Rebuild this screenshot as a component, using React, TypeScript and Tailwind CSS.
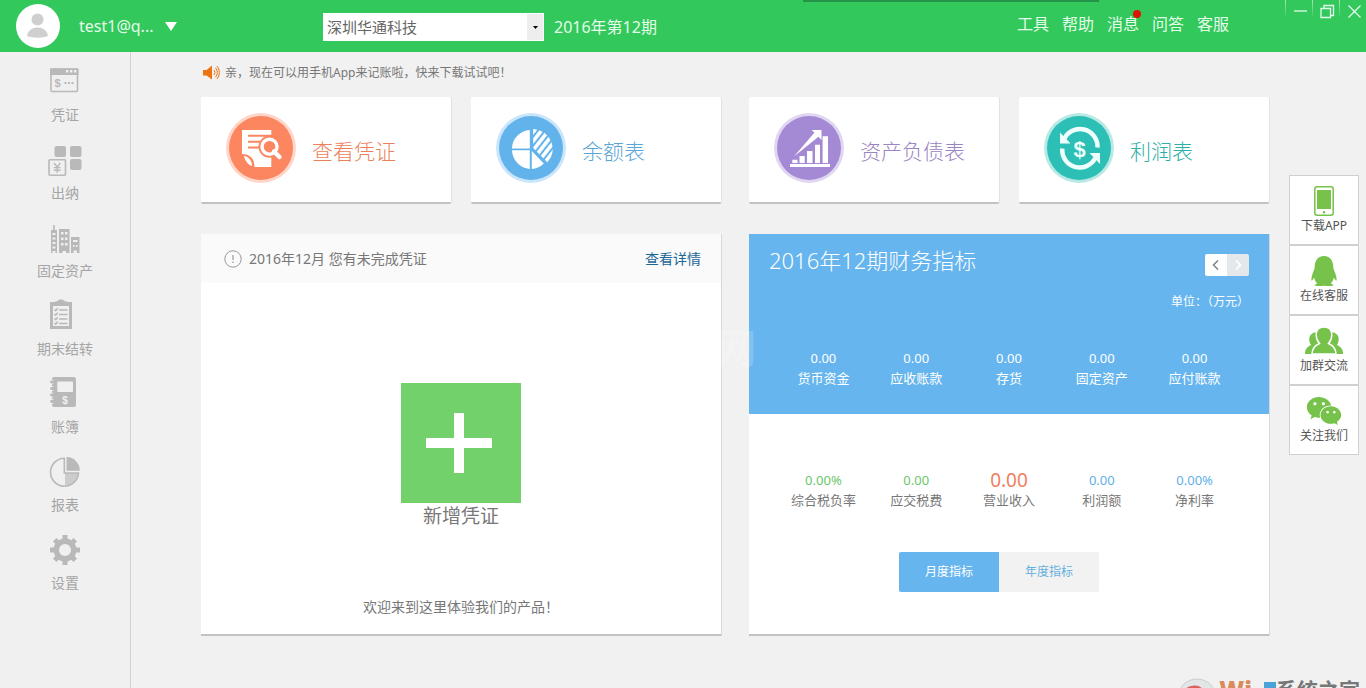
import type { ReactNode } from "react";
import { FaQq, FaWeixin } from "react-icons/fa";

const GREY = "#b9b9b9";

function VoucherIcon() {
  return (
    <svg width="40" height="40" viewBox="0 0 40 40">
      <rect x="6" y="8" width="26.5" height="22.5" rx="1" fill="none" stroke={GREY} strokeWidth="1.6" />
      <path d="M5 7.5h28.5V14H5z" fill={GREY} />
      <path d="M21 9h2.4v2.4H21zM25 9h2.4v2.4H25zM29 9h2.4v2.4H29z" fill="#f0f0f0" />
      <text x="9.5" y="26" fontSize="11" fontWeight="bold" fontFamily="Liberation Sans" fill={GREY}>$</text>
      <path d="M19.5 21h2v2h-2zM23 21h2v2h-2zM26.5 21h2v2h-2z" fill={GREY} />
    </svg>
  );
}

function CashierIcon() {
  return (
    <svg width="40" height="40" viewBox="0 0 40 40">
      <g fill={GREY}>
        <rect x="9.5" y="7" width="11.5" height="11" rx="2" />
        <rect x="25" y="7" width="11.5" height="11" rx="2" />
        <rect x="25" y="20" width="11.5" height="11" rx="2" />
      </g>
      <rect x="4" y="20.8" width="16.5" height="15.5" rx="1" fill="none" stroke={GREY} strokeWidth="1.6" />
      <path d="M9 24l3.2 4 3.2-4M12.2 28v6M8.8 28.6h6.8M8.8 31.2h6.8" fill="none" stroke={GREY} strokeWidth="1.4" />
    </svg>
  );
}

function AssetsIcon() {
  return (
    <svg width="40" height="40" viewBox="0 0 40 40">
      <path d="M8.2 8h1.6v5H12v23h-1.5v-2h-3v2H6V13h2.2zM14 12h10.5v24H21v-2h-3.500v2H14zM26 20h8.500v16H32v-2.500h-3.500V36H26z" fill={GREY} />
      <path d="M7.5 16h3v2h-3zM7.5 20.5h3v2h-3zM7.5 25h3v2h-3zM7.5 29.5h3v2h-3zM16 15h2.5v2.5H16zM20 15h2.5v2.5H20zM16 20.5h2.5V23H16zM20 20.5h2.5V23H20zM16 26h2.5v2.5H16zM20 26h2.5v2.5H20zM28 23h4.5v2H28zM28 28h1.5v2H28zM31 28h1.5v2H31z" fill="#f0f0f0" />
    </svg>
  );
}

function ClosingIcon() {
  return (
    <svg width="40" height="40" viewBox="0 0 40 40">
      <path d="M5 7h6l3.500-2.500h3L21 7h6v27H5z" fill={GREY} />
      <path d="M8 11h16v20H8z" fill="#f0f0f0" />
      <path d="M10 6.500h12V10H10z" fill={GREY} />
      <path d="M14 15h8.500M14 19.500h8.500M14 24h8.500M14 28.500h8.500M9.500 14.500l1.200 1.200 2-2.400M9.500 19l1.200 1.200 2-2.400M9.500 23.500l1.200 1.200 2-2.400M9.500 28l1.200 1.200 2-2.400" fill="none" stroke={GREY} strokeWidth="1.5" />
    </svg>
  );
}

function LedgerIcon() {
  return (
    <svg width="40" height="40" viewBox="0 0 40 40">
      <rect x="7" y="4" width="24" height="30" rx="2" fill={GREY} />
      <rect x="12.3" y="8.5" width="15.7" height="10.5" rx="1" fill="#f0f0f0" />
      <path d="M6 9h2.500M6 15.500h2.500M6 22h2.500M6 28.500h2.500" stroke="#f0f0f0" strokeWidth="4.4" />
      <path d="M6.500 9H9M6.500 15.500H9M6.500 22H9M6.500 28.500H9" stroke={GREY} strokeWidth="2.800" strokeLinecap="round" />
      <text x="20" y="31" textAnchor="middle" fontSize="10" fontWeight="bold" fontFamily="Liberation Sans" fill="#f0f0f0">$</text>
    </svg>
  );
}

function ReportIcon() {
  return (
    <svg width="40" height="40" viewBox="0 0 40 40">
      <path d="M19.3 7.2a14 14 0 1 0 14.2 14.8H19.3z" fill="none" stroke={GREY} strokeWidth="1.6" />
      <path d="M20 22h13a13 13 0 0 1-13 13z" fill={GREY} opacity="0.65" />
      <path d="M21.5 6a13.500 13.500 0 0 1 13.300 13.800H21.500z" fill={GREY} />
    </svg>
  );
}

function SettingsIcon() {
  return (
    <svg width="40" height="40" viewBox="0 0 40 40">
      <path d="M20 6v30M5 21h30M9.700 10.700l20.600 20.600M9.700 31.300l20.600-20.600" stroke={GREY} strokeWidth="5" />
      <circle cx="20" cy="21" r="11.5" fill={GREY} />
      <circle cx="20" cy="21" r="6" fill="#f0f0f0" />
    </svg>
  );
}

function ViewVoucherArt() {
  return (
    <svg width="70" height="70" viewBox="0 0 70 70">
      <circle cx="35" cy="35" r="35" fill="#ffd6c9" />
      <circle cx="35" cy="35" r="32" fill="#fb8660" />
      <path d="M16 17h29.300v37H28.500c0-8-4-13-12.500-13z" fill="#fff" />
      <path d="M18 43c4.500.500 8 4.500 8 10-3.500-1-7-5-8-10z" fill="#fff" />
      <path d="M22 22.700h24M22 28.700h13M22 34.500h11" stroke="#fb8660" strokeWidth="2" />
      <circle cx="43.5" cy="33.7" r="11" fill="#fb8660" />
      <path d="M49 39.500l4.500 4.500" stroke="#fb8660" strokeWidth="9" strokeLinecap="round" />
      <path d="M48 38.500l5.500 5.500" stroke="#fff" strokeWidth="4.500" strokeLinecap="round" />
      <circle cx="43.5" cy="33.7" r="7.500" fill="none" stroke="#fff" strokeWidth="3.400" />
    </svg>
  );
}

function BalanceArt() {
  return (
    <svg width="70" height="70" viewBox="0 0 70 70">
      <defs>
        <pattern id="hatch" width="5.6" height="5.6" patternUnits="userSpaceOnUse" patternTransform="rotate(38)">
          <rect width="3.6" height="5.6" fill="#fff" />
        </pattern>
      </defs>
      <circle cx="35" cy="35" r="35" fill="#cbe5fb" />
      <circle cx="35" cy="35" r="32" fill="#62b3eb" />
      <path d="M33.800 17v18.500H16A19 19 0 0 1 33.800 17zM16 37.300h17.800V56A19.500 19.500 0 0 1 16 37.300zM35.800 38l12 12.500A19 19 0 0 1 35.800 56z" fill="#fff" />
      <path d="M37.200 16A20 20 0 0 1 51.500 49.500L37.200 35z" fill="url(#hatch)" />
    </svg>
  );
}

function SheetArt() {
  return (
    <svg width="70" height="70" viewBox="0 0 70 70">
      <circle cx="35" cy="35" r="35" fill="#e0d6f1" />
      <circle cx="35" cy="35" r="32" fill="#a48ad4" />
      <path d="M16 51h40v3H16zM18.300 46.700h5.200V50h-5.200zM25.500 43h5.200v7h-5.200zM33 38h5.500v12H33zM41 31.700h5V50h-5zM48.600 23.300H54V50h-5.400z" fill="#fff" />
      <path d="M20 43.500L40.500 19.500l-3-2.500h10v10l-3-3.200z" fill="#fff" />
    </svg>
  );
}

function ProfitArt() {
  return (
    <svg width="70" height="70" viewBox="0 0 70 70">
      <circle cx="35" cy="35" r="35" fill="#b9e9e5" />
      <circle cx="35" cy="35" r="32" fill="#2bbfb5" />
      <g fill="none" stroke="#effffd" strokeWidth="4.500">
        <path d="M20 26.500A17.500 17.500 0 0 1 53.500 34.500" />
        <path d="M18.300 35.500a17.500 17.500 0 0 0 33 9.500" />
      </g>
      <path d="M16 19.500V30.500h10.500zM56 51V40H45.500z" fill="#effffd" />
      <text x="35.500" y="43.500" textAnchor="middle" fontSize="22" fontWeight="bold" fontFamily="Liberation Sans" fill="#effffd">$</text>
    </svg>
  );
}

function PhoneIcon() {
  return (
    <svg width="20" height="30" viewBox="0 0 20 30">
      <rect x="0.8" y="0.8" width="18.4" height="28.4" rx="2.5" fill="#fff" stroke="#76c24a" strokeWidth="1.5" />
      <path d="M3 4h14v19H3z" fill="#76c24a" />
      <circle cx="10" cy="26.2" r="1.2" fill="#76c24a" />
    </svg>
  );
}

function GroupIcon() {
  return (
    <svg width="38" height="28" viewBox="0 0 38 28">
      <g fill="#76c24a">
        <path d="M8 6c2.500-1 4 0 5 1v10L8 22l-1 5H0c0-5 2-7 6-9-3-5-2-10 2-12z" />
        <path d="M30 6c-2.500-1-4 0-5 1v10l5 5 1 5h7c0-5-2-7-6-9 3-5 2-10-2-12z" />
        <path d="M19 0c5 0 7.800 3.500 7.800 8 0 4-1.500 6.500-3.300 8.500 4.500 2 7.500 5 7.500 10.500H7c0-5.500 3-8.500 7.500-10.500C12.700 14.500 11.200 12 11.200 8c0-4.500 2.800-8 7.800-8z" stroke="#fff" strokeWidth="1.5" />
      </g>
    </svg>
  );
}

const NAV: { label: string; icon: ReactNode }[] = [
  { label: "凭证", icon: <VoucherIcon /> },
  { label: "出纳", icon: <CashierIcon /> },
  { label: "固定资产", icon: <AssetsIcon /> },
  { label: "期末结转", icon: <ClosingIcon /> },
  { label: "账簿", icon: <LedgerIcon /> },
  { label: "报表", icon: <ReportIcon /> },
  { label: "设置", icon: <SettingsIcon /> },
];

const CARDS: { label: string; color: string; art: ReactNode }[] = [
  { label: "查看凭证", color: "text-[#ec7f5b]", art: <ViewVoucherArt /> },
  { label: "余额表", color: "text-[#5aa6d8]", art: <BalanceArt /> },
  { label: "资产负债表", color: "text-[#9a84c2]", art: <SheetArt /> },
  { label: "利润表", color: "text-[#2fb0a6]", art: <ProfitArt /> },
];

const BALANCES = ["货币资金", "应收账款", "存货", "固定资产", "应付账款"];

const RATES = [
  { label: "综合税负率", value: "0.00%", style: "text-[13px] text-[#6cc66a]" },
  { label: "应交税费", value: "0.00", style: "text-[13px] text-[#6cc66a]" },
  { label: "营业收入", value: "0.00", style: "text-[19px] text-[#f08060]" },
  { label: "利润额", value: "0.00", style: "text-[13px] text-[#5fb0e6]" },
  { label: "净利率", value: "0.00%", style: "text-[13px] text-[#5fb0e6]" },
];

const DOCK: { label: string; icon: ReactNode }[] = [
  { label: "下载APP", icon: <PhoneIcon /> },
  { label: "在线客服", icon: <FaQq size={30} /> },
  { label: "加群交流", icon: <GroupIcon /> },
  { label: "关注我们", icon: <FaWeixin size={36} /> },
];

const WINDOW_CONTROLS = [
  { name: "最小化", d: "M1 7h13" },
  { name: "还原", d: "M1 4.500h9.500v9H1zM4 4.500v-3h9.500v10h-3" },
  { name: "关闭", d: "M1.500 1.500l12 12M13.500 1.500l-12 12" },
];

function Header() {
  return (
    <header className="relative flex h-[52px] shrink-0 bg-[#32c85c] text-white">
      <div className="absolute left-[803px] top-0 h-[2px] w-[296px] bg-[#239447]" />
      <div className="flex w-[323px] items-center pl-4">
        <svg width="44" height="44" viewBox="0 0 44 44">
          <circle cx="22" cy="22" r="22" fill="#fff" />
          <circle cx="21.5" cy="15.5" r="6" fill="#cfcfcf" />
          <path d="M11 32c1-5.500 5-8.500 10.500-8.500S31 26.500 32 32c-6 2.200-15 2.200-21 0z" fill="#cfcfcf" />
        </svg>
        <button className="ml-[19px] flex items-center gap-3 text-base text-[#e4fbea]">
          test1@q...
          <svg width="12" height="9" viewBox="0 0 12 9"><path d="M0 0h12L6 9z" fill="#fff" /></svg>
        </button>
      </div>
      <div className="flex items-center gap-[10px] pt-[2px]">
        <div className="relative">
          <select aria-label="公司" className="block h-7 w-[221px] appearance-none bg-white pl-1 text-[15px] text-[#666]">
            <option>深圳华通科技</option>
          </select>
          <div className="pointer-events-none absolute inset-y-px right-px flex w-4 items-center justify-center bg-[#eee]">
            <svg width="5" height="3" viewBox="0 0 5 3"><path d="M0 0h5L2.500 3z" fill="#000" /></svg>
          </div>
        </div>
        <span className="text-base text-[#e4fbea]">2016年第12期</span>
      </div>
      <nav className="ml-auto mr-14 flex items-center gap-[13px] pb-1 text-base text-[#e4fbea]">
        <a href="#">工具</a>
        <a href="#">帮助</a>
        <a href="#" className="relative">
          消息
          <span className="absolute -right-[2px] -top-[2px] size-2 rounded-full bg-[#dd1506]" />
        </a>
        <a href="#">问答</a>
        <a href="#">客服</a>
      </nav>
      <div className="flex items-start text-[#e4fbea]">
        {WINDOW_CONTROLS.map(({ name, d }) => (
          <button key={name} aria-label={name} className="flex w-[27px] pt-1">
            <span className="-mt-1 h-[18px] w-px bg-linear-to-b from-[#a0e8b4] to-[#32c85c]" />
            <svg className="ml-[7px]" width="15" height="15" viewBox="0 0 15 15" fill="none" stroke="currentColor" strokeWidth="1.3">
              <path d={d} />
            </svg>
          </button>
        ))}
      </div>
    </header>
  );
}

function VoucherPanel() {
  return (
    <section className="flex flex-col border-b-2 border-[#c2c2c2] bg-white shadow-[1px_0_0_#d8d8d8]">
      <div className="flex h-[49px] items-center bg-[#fafafa] pl-[23px] pr-5 text-sm text-[#777]">
        <svg width="18" height="18" viewBox="0 0 18 18">
          <circle cx="9" cy="9" r="8.2" fill="none" stroke="#999" />
          <path d="M9 5v5M9 11.500V13" stroke="#999" strokeWidth="1.2" />
        </svg>
        <span className="ml-[7px]">2016年12月 您有未完成凭证</span>
        <a href="#" className="ml-auto text-[#1b6796]">查看详情</a>
      </div>
      <button className="mt-[100px] flex flex-col items-center self-center text-[19px] leading-[26px] text-[#777]">
        <span className="flex size-[120px] items-center justify-center bg-[#73d16c] pr-1">
          <svg width="66" height="60" viewBox="0 0 66 60"><path d="M28 0h10v25h28v10H38v25H28V35H0V25h28z" fill="#fff" /></svg>
        </span>
        新增凭证
      </button>
      <p className="mt-[68px] text-center text-sm text-[#777]">欢迎来到这里体验我们的产品！</p>
    </section>
  );
}

function IndicatorPanel() {
  return (
    <section className="border-b-2 border-[#c2c2c2] bg-white pb-[42px] shadow-[1px_0_0_#d8d8d8]">
      <div className="h-[180px] bg-[#66b5ee] px-5 pt-3 text-white">
        <div className="flex h-[38px] justify-between">
          <h2 className="text-[22px] font-light leading-7">2016年12期财务指标</h2>
          <div className="mt-2 flex h-[22px] w-11 overflow-hidden rounded-xs">
            <button aria-label="上一期" className="flex flex-1 items-center justify-center bg-white text-[#888]">
              <svg width="8" height="10" viewBox="0 0 8 10" fill="none" stroke="currentColor" strokeWidth="1.6"><path d="M6 0.500L1.500 5 6 9.500" /></svg>
            </button>
            <button aria-label="下一期" className="flex flex-1 items-center justify-center bg-[#e4e8eb] text-white">
              <svg width="8" height="10" viewBox="0 0 8 10" fill="none" stroke="currentColor" strokeWidth="1.6"><path d="M2 0.500L6.500 5 2 9.500" /></svg>
            </button>
          </div>
        </div>
        <p className="mt-2 text-right text-xs leading-5">单位：（万元）</p>
        <dl className="mt-9 grid grid-cols-5 px-2 text-center text-[13px] leading-5">
          {BALANCES.map((label) => (
            <div key={label} className="flex flex-col-reverse">
              <dt>{label}</dt>
              <dd>0.00</dd>
            </div>
          ))}
        </dl>
      </div>
      <dl className="mt-14 grid grid-cols-5 px-7 text-center">
        {RATES.map(({ label, value, style }) => (
          <div key={label} className="flex flex-col-reverse">
            <dt className="text-[13px] leading-5 text-[#777]">{label}</dt>
            <dd className={style}><span className="block leading-5">{value}</span></dd>
          </div>
        ))}
      </dl>
      <div className="mt-[42px] flex justify-center pr-5 text-xs">
        <button className="h-10 w-[100px] rounded-l-xs bg-[#66b5ee] text-white">月度指标</button>
        <button className="h-10 w-[100px] rounded-r-xs bg-[#f2f2f2] text-[#66b0e0]">年度指标</button>
      </div>
    </section>
  );
}

export default function App() {
  return (
    <div lang="zh-CN" className="relative flex h-screen flex-col overflow-hidden bg-[#f1f1f1] font-['Noto_Sans','Noto_Sans_CJK_SC',sans-serif]">
      <Header />
      <div className="flex flex-1">
        <nav className="flex w-[131px] shrink-0 flex-col gap-[14px] border-r border-[#d2d2d2] bg-[#f0f0f0] pt-[9px]">
          {NAV.map(({ label, icon }) => (
            <a key={label} href="#" className="flex flex-col items-center gap-1 text-sm text-[#a5a5a5]">
              {icon}
              {label}
            </a>
          ))}
        </nav>
        <main className="flex-1 pl-[70px] pr-5">
          <p className="flex h-[45px] items-center gap-[5px] pb-1 text-xs text-[#777]">
            <svg width="18" height="16" viewBox="0 0 18 16" className="ml-px">
              <path d="M1 5h3.500L10 0.500v14L4.500 10.500H1z" fill="#ee7411" />
              <path d="M12 5a4 4 0 0 1 0 5M13.500 2.800a7 7 0 0 1 0 9.400M15 1a10 10 0 0 1 0 13" fill="none" stroke="#ee7411" />
            </svg>
            亲，现在可以用手机App来记账啦，快来下载试试吧！
          </p>
          <div className="grid grid-cols-2 gap-x-7 gap-y-[30px]">
            {[CARDS.slice(0, 2), CARDS.slice(2)].map((pair) => (
              <div key={pair[0].label} className="grid grid-cols-2 gap-5">
                {pair.map(({ label, color, art }) => (
                  <a key={label} href="#" className="flex h-[107px] items-start gap-4 rounded-xs border-b-2 border-[#c2c2c2] bg-white pl-[25px] pt-4 shadow-[1px_0_0_#e2e2e2]">
                    {art}
                    <span className={`text-[21px] font-light leading-[76px] ${color}`}>{label}</span>
                  </a>
                ))}
              </div>
            ))}
            <VoucherPanel />
            <IndicatorPanel />
          </div>
        </main>
        <aside className="mr-[7px] w-[70px] pt-[123px]">
          {DOCK.map(({ label, icon }) => (
            <a key={label} href="#" className="flex h-[70px] flex-col items-center border border-[#d0d0d0] bg-white pt-2 text-xs text-[#555]">
              <span className="flex h-[34px] items-center text-[#76c24a]">{icon}</span>
              {label}
            </a>
          ))}
        </aside>
      </div>
      <div className="pointer-events-none absolute left-[716px] top-[324px] text-[40px] font-bold leading-[48px] text-white/20">网</div>
      <div className="pointer-events-none absolute -bottom-[18px] right-[6px] flex h-7 items-start text-[21px] font-bold leading-6 text-[#777]">
        <svg width="44" height="28" viewBox="0 0 44 28">
          <circle cx="22" cy="20" r="19" fill="#e3e6e6" stroke="#c8cccc" />
          <path d="M10 14c4-5 12-6 16-2" fill="none" stroke="#d9635a" strokeWidth="4" />
        </svg>
        <span className="text-2xl font-black leading-6 text-[#dc8a5c]">Wi</span>
        <span className="ml-3 mt-1 size-3 bg-[#4aa3d8]" />
        系统之家
      </div>
    </div>
  );
}
